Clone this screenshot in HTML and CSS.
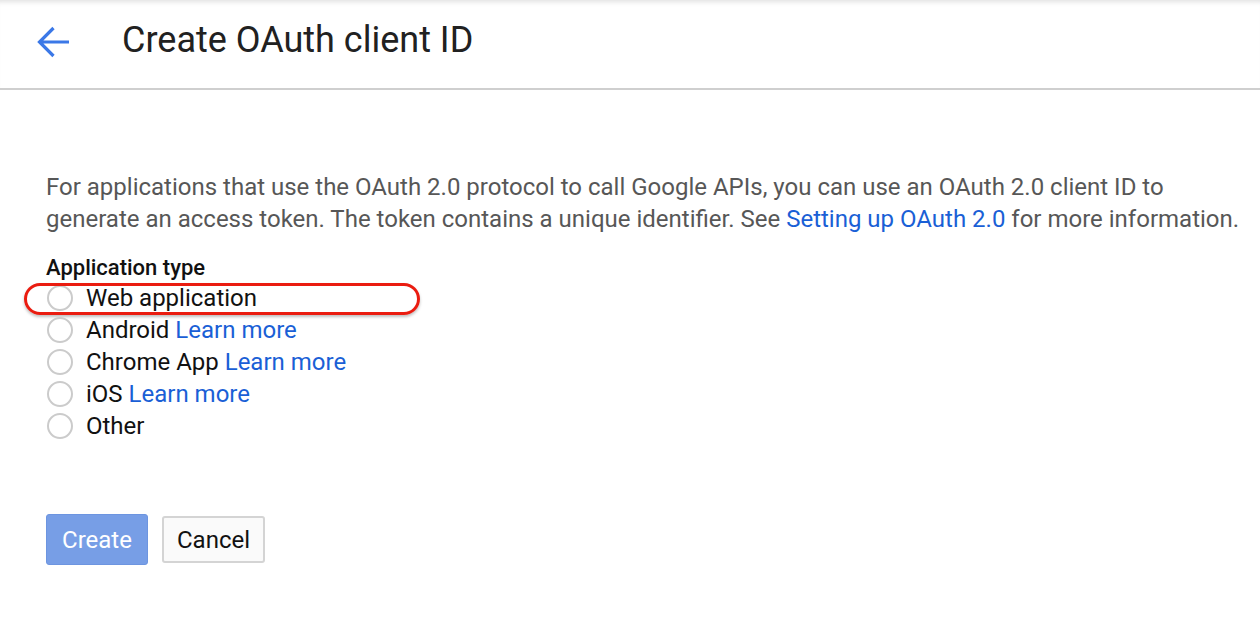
FILE: index.html
```html
<!DOCTYPE html>
<html>
<head>
<meta charset="utf-8">
<link rel="stylesheet" href="styles.css">
</head>
<body>
<header class="topbar">
  <svg class="back" width="36" height="34" viewBox="0 0 36 34" aria-hidden="true">
    <path d="M34 17H5M18.5 3L4.5 17l14 14" fill="none" stroke="#3b78e7" stroke-width="3.2"/>
  </svg>
  <h1 class="title">Create OAuth client ID</h1>
</header>
<main class="content">
  <p class="intro">For applications that use the OAuth 2.0 protocol to call Google APIs, you can use an OAuth 2.0 client ID to generate an access token. The token contains a unique identifier. See <a href="#">Setting up OAuth 2.0</a> for more information.</p>
  <div class="field-label">Application type</div>
  <ul class="options">
    <li class="option highlighted"><span class="radio"></span><span>Web application</span></li>
    <li class="option"><span class="radio"></span><span>Android <a href="#">Learn more</a></span></li>
    <li class="option"><span class="radio"></span><span>Chrome App <a href="#">Learn more</a></span></li>
    <li class="option"><span class="radio"></span><span>iOS <a href="#">Learn more</a></span></li>
    <li class="option"><span class="radio"></span><span>Other</span></li>
  </ul>
  <div class="actions">
    <button class="btn btn-primary">Create</button>
    <button class="btn btn-secondary">Cancel</button>
  </div>
</main>
</body>
</html>
```
FILE: styles.css
```css
html, body {
  margin: 0;
  padding: 0;
  background: #fff;
  font-family: Roboto, "Liberation Sans", sans-serif;
}
.topbar {
  height: 88px;
  border-bottom: 2px solid #cfcfcf;
  display: flex;
  align-items: center;
  box-shadow: inset 0 6px 5px -4px rgba(0,0,0,0.12);
}
.back {
  margin-left: 35px;
  margin-right: 51px;
  margin-top: -4px;
}
.title {
  margin: -8px 0 0 0;
  font-size: 36px;
  line-height: 44px;
  font-weight: 400;
  color: #212121;
}
.content {
  padding: 81px 10px 0 46px;
}
.intro {
  margin: 0;
  font-size: 24px;
  line-height: 32px;
  color: #575757;
}
a {
  color: #1a5fd6;
  text-decoration: none;
}
.field-label {
  margin-top: 19px;
  font-size: 22px;
  font-weight: 500;
  color: #111;
  line-height: 28px;
}
.options {
  list-style: none;
  margin: 0;
  padding: 0;
}
.option {
  display: flex;
  align-items: center;
  height: 32px;
  font-size: 24px;
  color: #111;
  position: relative;
}
.radio {
  width: 22px;
  height: 22px;
  border: 2px solid #cbcbcb;
  border-radius: 50%;
  margin-left: 1px;
  margin-right: 13px;
  flex: none;
}
.highlighted::before {
  content: "";
  position: absolute;
  left: -22px;
  top: 1px;
  width: 390px;
  height: 26px;
  border: 3px solid #ea1c10;
  border-radius: 16px;
  box-shadow: 0 2px 3px rgba(0,0,0,0.25);
}
.actions {
  margin-top: 72px;
  display: flex;
  align-items: center;
  gap: 14px;
}
.btn {
  font-family: Roboto, "Liberation Sans", sans-serif;
  font-size: 24px;
  border-radius: 3px;
  cursor: pointer;
  padding: 0;
}
.btn-primary {
  width: 102px;
  height: 51px;
  background: #779ee6;
  color: #fff;
  border: 1px solid #6d95e0;
}
.btn-secondary {
  width: 103px;
  height: 47px;
  background: #fafafa;
  color: #111;
  border: 2px solid #d4d4d4;
}
```
